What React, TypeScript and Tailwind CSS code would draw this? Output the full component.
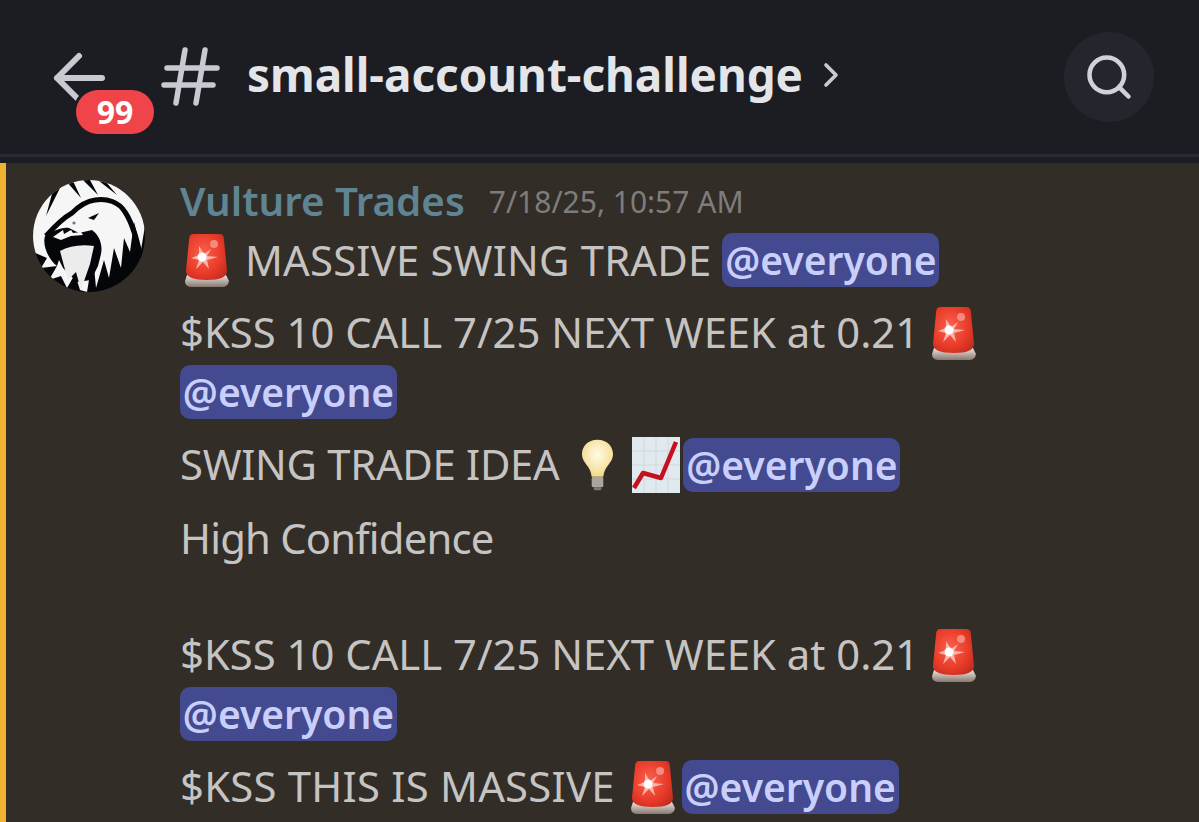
import React from 'react';
import { Search, ChevronRight } from 'lucide-react';

const Mention = ({ className = '' }: { className?: string }) => (
  <span className={`inline-block h-[54px] w-[217px] shrink-0 rounded-[10px] bg-[#444a8f] text-center text-[39px] font-semibold leading-[54px] text-[#c9cffb] ${className}`}>
    @everyone
  </span>
);

const Siren = ({ className = '' }: { className?: string }) => (
  <svg viewBox="0 0 46 54" className={`h-[54px] w-[46px] shrink-0 ${className}`}>
    <defs>
      <radialGradient id="flash" cx="0.42" cy="0.42" r="0.75">
        <stop offset="0" stopColor="#f8624e" />
        <stop offset="0.6" stopColor="#e93a28" />
        <stop offset="1" stopColor="#b82a1e" />
      </radialGradient>
      <linearGradient id="base" x1="0" y1="0" x2="0" y2="1">
        <stop offset="0" stopColor="#efe3da" />
        <stop offset="1" stopColor="#857972" />
      </linearGradient>
      <filter id="soft">
        <feGaussianBlur stdDeviation="0.7" />
      </filter>
    </defs>
    <path d="M3 42 L42 42 L45 48 Q44 54 38 54 L8 54 Q1 54 1 48 Z" fill="url(#base)" />
    <path d="M9 1 L36 1 Q40 1 40 7 L43 38 Q43 47 23 47 Q2 47 2 38 L5 7 Q5 1 9 1 Z" fill="url(#flash)" />
    <g filter="url(#soft)">
      <path d="M15 13 L20 21 L27 16 L23 23 L34 24 L23 27 L25 36 L19 29 L12 36 L15 27 L7 25 L15 22 Z" fill="#ffb4a8" />
      <circle cx="18" cy="24" r="4.5" fill="#ffffff" />
      <circle cx="30" cy="11" r="4" fill="#f58a80" />
    </g>
  </svg>
);

const Bulb = ({ className = '' }: { className?: string }) => (
  <svg viewBox="0 0 34 56" className={`h-[56px] w-[33px] shrink-0 ${className}`}>
    <defs>
      <radialGradient id="glow" cx="0.5" cy="0.4" r="0.6">
        <stop offset="0" stopColor="#fffbe6" />
        <stop offset="1" stopColor="#f3d98a" />
      </radialGradient>
    </defs>
    <path d="M17 2 C7 2 1 9 1 17 C1 26 10 29 11 40 L23 40 C24 29 33 26 33 17 C33 9 27 2 17 2 Z" fill="url(#glow)" />
    <rect x="11" y="40" width="12" height="11" rx="2" fill="#a9a69d" />
    <rect x="13" y="51" width="8" height="3" rx="1.5" fill="#7d7a72" />
  </svg>
);

const Chart = ({ className = '' }: { className?: string }) => (
  <svg viewBox="0 0 48 56" className={`h-[56px] w-[48px] shrink-0 ${className}`}>
    <rect width="48" height="56" fill="#e0e9ee" />
    <path d="M0 14H48M0 28H48M0 42H48M12 0V56M24 0V56M36 0V56" stroke="#d0dade" strokeWidth="1" />
    <path d="M2 51 L11 36 L29 41 L44 5" fill="none" stroke="#c5101f" strokeWidth="4.5" strokeLinejoin="round" />
  </svg>
);

const Avatar = () => (
  <svg viewBox="0 0 112 112" className="h-[112px] w-[112px] shrink-0">
    <defs>
      <clipPath id="round">
        <circle cx="56" cy="56" r="56" />
      </clipPath>
    </defs>
    <circle cx="56" cy="56" r="56" fill="#05060a" />
    <g clipPath="url(#round)">
      {/* white field with jagged feather edge */}
      <path d="M0 0 H112 V46 L108 70 L101 42 L97 72 L91 58 L88 88 L81 68 L76 98 L71 80 L63 108 L60 76 L54 112 L47 110 L42 94 L34 108 L28 96 L16 100 L24 86 L8 88 L14 78 L0 72 Z" fill="#f6f6f6" />
      {/* head outline */}
      <path d="M13 56 C22 46 30 38 39 33 C46 26 54 21 62 20 C74 18 86 22 92 32 C100 44 104 60 108 78" fill="none" stroke="#05060a" strokeWidth="5" />
      {/* top streaks */}
      <path d="M33 1 L40 1 L48 18 Z M50 0 L57 0 L65 15 Z M66 1 L73 2 L84 15 Z M20 10 L28 6 L13 36 Z" fill="#05060a" />
      {/* hooked beak and throat band */}
      <path d="M12 56 C20 51 28 47 36 48 L46 53 L59 50 C66 55 70 64 68 74 L65 86 L58 100 L44 102 L30 88 L26 80 L24 86 C16 80 9 66 12 56 Z" fill="#05060a" />
      {/* flecks on top of the band */}
      <path d="M20 57 L30 50 L31 54 L38 50 L40 53 L48 52 L50 55 L38 56 L28 60 Z" fill="#f6f6f6" />
      {/* chest */}
      <path d="M27 71 C36 66 48 64 61 66 L57 84 L48 110 L43 92 L35 100 L31 86 Z" fill="#ececec" />
      {/* eye and nostril */}
      <path d="M55 38 L66 33 L61 40 Z" fill="#05060a" />
      <circle cx="41" cy="43" r="1.6" fill="#777" />
    </g>
  </svg>
);

export default function App() {
  return (
    <div className="flex h-[822px] w-[1199px] flex-col overflow-hidden bg-[#322d27] font-['Noto_Sans',sans-serif]">
      {/* Header */}
      <div className="flex h-[154px] shrink-0 items-center bg-[#1c1d23] pl-[50px] pr-[45px]">
        <div className="relative h-[60px] w-[60px] -translate-y-[2px]">
          <svg viewBox="0 0 60 60" className="h-[60px] w-[60px]" fill="none" stroke="#c8cad2" strokeWidth="6" strokeLinecap="round" strokeLinejoin="round">
            <path d="M7 33 H52 M29 11 L7 33 L28 54" />
          </svg>
          <span className="absolute left-[26px] top-[45px] flex h-[44px] w-[78px] items-center justify-center rounded-full bg-[#f0444b] text-[32px] font-bold leading-none text-white ring-[3px] ring-[#1c1d23]">
            99
          </span>
        </div>
        <svg viewBox="0 0 60 64" className="ml-[50px] h-[64px] w-[60px] -translate-y-[1px]" fill="none" stroke="#c8cad2" strokeWidth="5.5" strokeLinecap="round">
          <path d="M7 24 H57 M4 41 H53 M25 6 L16 59 M45 6 L36 59" />
        </svg>
        <span className="ml-[27px] -translate-y-[2px] text-[45.8px] font-bold leading-none text-[#e4e5e9]">small-account-challenge</span>
        <ChevronRight size={40} strokeWidth={2.2} className="ml-[8px] -translate-y-[2px] text-[#c8cad2]" />
        <div className="ml-auto flex h-[90px] w-[90px] items-center justify-center rounded-full bg-[#24252d]">
          <Search size={52} strokeWidth={2.1} className="text-[#d0d2da]" />
        </div>
      </div>
      <div className="h-[9px] shrink-0 border-t-[3px] border-[#2a2c35] bg-[#1c1d23]" />

      {/* Message */}
      <div className="flex flex-1 border-l-[6px] border-[#f0b232] pl-[27px] pt-[17px]">
        <Avatar />
        <div className="ml-[35px] flex flex-col whitespace-nowrap text-[41.8px] leading-[59px] text-[#c6c4c2]">
          <div className="flex h-[42px] items-center">
            <span className="-translate-y-[1px] text-[40.3px] font-semibold text-[#5f8494]">Vulture Trades</span>
            <span className="ml-[24px] text-[30px] text-[#7e7d7c]">7/18/25, 10:57 AM</span>
          </div>
          <p className="mt-[8px] flex h-[59px] items-center">
            <Siren className="ml-[4px]" />
            <span className="ml-[15px] tracking-[0.2px]">MASSIVE SWING TRADE</span>
            <Mention className="ml-[11px]" />
          </p>
          <p className="mt-[14px] flex h-[59px] items-center">
            <span className="-translate-y-[1px]">$KSS 10 CALL 7/25 NEXT WEEK at 0.21</span>
            <Siren className="ml-[12px]" />
          </p>
          <p className="flex h-[59px] items-center"><Mention /></p>
          <p className="mt-[14px] flex h-[59px] items-center">
            <span className="-translate-y-[1px] tracking-[-0.3px]">SWING TRADE IDEA</span>
            <Bulb className="ml-[22px]" />
            <Chart className="ml-[18px]" />
            <Mention className="ml-[3px]" />
          </p>
          <p className="mt-[14px] h-[59px] tracking-[-0.8px]">High Confidence</p>
          <p className="h-[58px]" />
          <p className="flex h-[59px] items-center">
            <span className="-translate-y-[1px]">$KSS 10 CALL 7/25 NEXT WEEK at 0.21</span>
            <Siren className="ml-[12px]" />
          </p>
          <p className="flex h-[59px] items-center"><Mention /></p>
          <p className="mt-[14px] flex h-[59px] items-center">
            <span className="-translate-y-[1px] tracking-[0.25px]">$KSS THIS IS MASSIVE</span>
            <Siren className="ml-[15px]" />
            <Mention className="ml-[6px]" />
          </p>
        </div>
      </div>
    </div>
  );
}
